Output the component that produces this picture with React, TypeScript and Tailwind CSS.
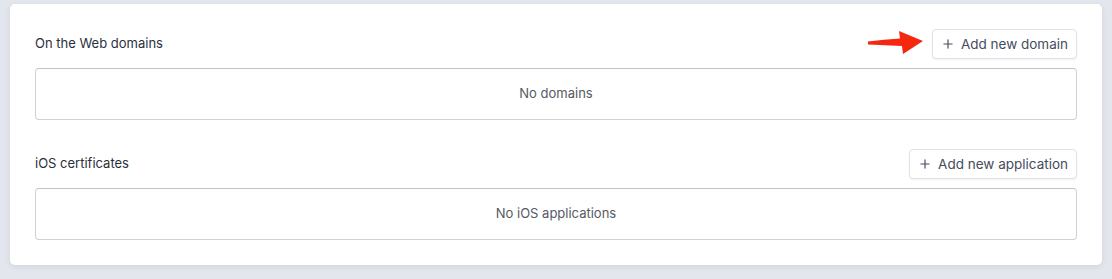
import { Plus } from "lucide-react";

const Section = ({ title, action, empty }: { title: string; action: string; empty: string }) => (
  <div>
    <div className="flex items-center justify-between">
      <div className="text-[13px] text-[#2a303c]">{title}</div>
      <button
        type="button"
        className="flex h-[30px] items-center gap-[6px] rounded-[4px] border border-[#dfe2e7] bg-white pl-[8px] pr-[8px] text-[13.5px] text-[#454c5c] shadow-[0_1px_2px_rgba(0,0,0,0.06)]"
      >
        <Plus size={14} strokeWidth={2} />
        {action}
      </button>
    </div>
    <div className="mt-[9px] flex h-[52px] items-center justify-center rounded-[4px] border border-[#cfd3d9] border-t-[#bfc3c9] text-[13px] text-[#555a63]">
      {empty}
    </div>
  </div>
);

export default function App() {
  return (
    <div className="h-[279px] w-[1112px] bg-[#e3e7ed] pl-[10px] pr-[10px] pt-[4px] font-['Inter',sans-serif]">
      <div className="relative flex w-[1092px] flex-col gap-[29px] rounded-[5px] bg-white px-[25px] pb-[25px] pt-[25px] shadow-[0_2px_6px_rgba(0,0,0,0.08)]">
        <Section title="On the Web domains" action="Add new domain" empty="No domains" />
        <Section title="iOS certificates" action="Add new application" empty="No iOS applications" />
        <svg className="absolute left-[858px] top-[27px]" width="58" height="25" viewBox="0 0 58 25">
          <path d="M0 10.5 Q16 8.5 32 7.5 L31 0 L55 10 L35 23 L34 15 Q17 14 0 13.5 Z" fill="#f5270f" />
        </svg>
      </div>
    </div>
  );
}
